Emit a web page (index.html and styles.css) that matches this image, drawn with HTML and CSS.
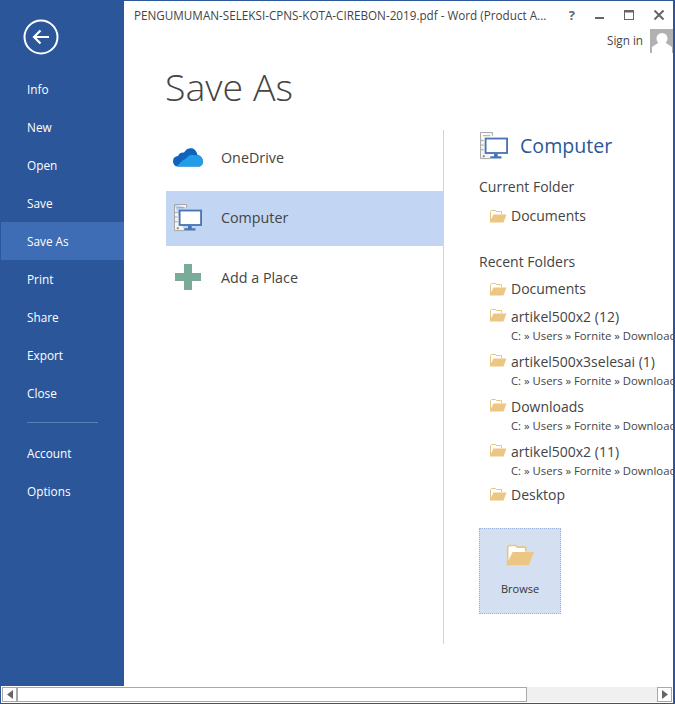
FILE: index.html
```html
<!DOCTYPE html>
<html>
<head>
  <meta charset="utf-8">
  <title>Save As</title>
  <link rel="stylesheet" href="styles.css">
</head>
<body>
<svg class="defs" width="0" height="0">
  <defs>
    <symbol id="folder" viewBox="0 0 18 14">
      <path d="M1.5 12.5V2.5L2.5 1.5H6.5L7.5 2.5H12.5V5" fill="#fff" stroke="#e9c583"/>
      <path d="M0.5 13.5L4.5 5.5H17.5L14.5 13.5Z" fill="#ebc684"/>
    </symbol>
    <symbol id="computer" viewBox="0 0 30 30">
      <path d="M.5.5H13.5V4M.5.5V28.5H11" fill="#f4f4f4" stroke="#a0a0a0"/>
      <path d="M3 4H11M1 9H4M1 14H4M1 19H4" stroke="#a0a0a0"/>
      <rect x="3" y="25" width="2" height="2" fill="#808080"/>
      <rect x="6" y="7" width="23" height="15.5" fill="#fff" stroke="#4a77b4" stroke-width="2"/>
      <path d="M15 23.5h4v2.5h4v2.5H11V26h4z" fill="#4a77b4"/>
    </symbol>
  </defs>
</svg>
<div class="window">
  <div class="main">
    <div class="sidebar">
      <div class="back">
        <svg width="36" height="36" viewBox="0 0 36 36">
          <circle cx="18" cy="18" r="16.5" fill="none" stroke="#fff" stroke-width="2"/>
          <path d="M26 18H11M17.5 11.5L11 18L17.5 24.5" fill="none" stroke="#fff" stroke-width="2.2"/>
        </svg>
      </div>
      <div class="nav-item">Info</div>
      <div class="nav-item">New</div>
      <div class="nav-item">Open</div>
      <div class="nav-item">Save</div>
      <div class="nav-item active">Save As</div>
      <div class="nav-item">Print</div>
      <div class="nav-item">Share</div>
      <div class="nav-item">Export</div>
      <div class="nav-item">Close</div>
      <div class="nav-sep"></div>
      <div class="nav-item">Account</div>
      <div class="nav-item">Options</div>
    </div>
    <div class="content">
      <div class="titlebar">
        <div class="doc-title">PENGUMUMAN-SELEKSI-CPNS-KOTA-CIREBON-2019.pdf - Word (Product A...</div>
        <div class="win-buttons">
          <span class="help">?</span>
          <svg class="min-btn" width="9" height="2" viewBox="0 0 9 2"><rect width="9" height="2" fill="#666"/></svg>
          <svg width="10" height="10" viewBox="0 0 10 10"><rect x=".5" y=".5" width="9" height="9" fill="none" stroke="#666"/><rect width="10" height="2.5" fill="#666"/></svg>
          <svg width="10" height="10" viewBox="0 0 10 10"><path d="M.5.5L9.5 9.5M9.5.5L.5 9.5" stroke="#666" stroke-width="2"/></svg>
        </div>
      </div>
      <div class="signin">
        <span>Sign in</span>
        <svg class="avatar" width="24" height="24" viewBox="0 0 24 24">
          <rect width="24" height="24" fill="#b1b1b1"/>
          <circle cx="12" cy="9.5" r="5.5" fill="#fff"/>
          <path d="M2 24V18L8 14H16L22 18V24Z" fill="#fff"/>
        </svg>
      </div>
      <h1 class="page-title">Save As</h1>
      <div class="columns">
        <div class="places">
          <div class="place">
            <svg class="place-icon" width="30" height="20" viewBox="0 0 30 20">
              <path d="M5 19.5C1 19.5 0 16 0 14C0 11 2 9.5 5 9C6 6 9 5 11 5.5C13 1.5 17 .5 20 1.5C22 2.5 24 5 24.5 8C27.5 8.5 30 11 30 14.5C30 17.5 28 19.5 25.5 19.5Z" fill="#0f63be"/>
              <path d="M3.5 19.5L9 14L13 11.5Q17 7 20 8Q24 8 26 9Q30 11 30 14.5C30 17.5 28 19.5 25.5 19.5Z" fill="#229ee8"/>
            </svg>
            <span>OneDrive</span>
          </div>
          <div class="place selected">
            <svg class="place-icon computer-icon" width="28" height="28"><use href="#computer"/></svg>
            <span>Computer</span>
          </div>
          <div class="place">
            <svg class="place-icon plus-icon" width="26" height="26" viewBox="0 0 26 26">
              <path d="M9 0H17V9H26V17H17V26H9V17H0V9H9Z" fill="#7aab98"/>
            </svg>
            <span>Add a Place</span>
          </div>
        </div>
        <div class="detail">
          <div class="detail-head">
            <svg width="28" height="28"><use href="#computer"/></svg>
            <span>Computer</span>
          </div>
          <div class="group-title first">Current Folder</div>
          <div class="folder"><svg width="18" height="14"><use href="#folder"/></svg><span>Documents</span></div>
          <div class="group-title second">Recent Folders</div>
          <div class="folder"><svg width="18" height="14"><use href="#folder"/></svg><span>Documents</span></div>
          <div class="folder two-line"><svg width="18" height="14"><use href="#folder"/></svg><div><div>artikel500x2 (12)</div><div class="path">C: » Users » Fornite » Downloads</div></div></div>
          <div class="folder two-line"><svg width="18" height="14"><use href="#folder"/></svg><div><div>artikel500x3selesai (1)</div><div class="path">C: » Users » Fornite » Downloads</div></div></div>
          <div class="folder two-line"><svg width="18" height="14"><use href="#folder"/></svg><div><div>Downloads</div><div class="path">C: » Users » Fornite » Downloads</div></div></div>
          <div class="folder two-line"><svg width="18" height="14"><use href="#folder"/></svg><div><div>artikel500x2 (11)</div><div class="path">C: » Users » Fornite » Downloads</div></div></div>
          <div class="folder last"><svg width="18" height="14"><use href="#folder"/></svg><span>Desktop</span></div>
          <div class="browse">
            <svg width="30" height="23"><use href="#folder"/></svg>
            <span>Browse</span>
          </div>
        </div>
      </div>
    </div>
  </div>
  <div class="scrollbar">
    <div class="arrow"><svg width="6" height="9" viewBox="0 0 6 9"><path d="M6 0V9L0 4.5Z" fill="#666"/></svg></div>
    <div class="thumb"></div>
    <div class="track"></div>
    <div class="arrow"><svg width="6" height="9" viewBox="0 0 6 9"><path d="M0 0V9L6 4.5Z" fill="#666"/></svg></div>
  </div>
</div>
</body>
</html>
```

FILE: styles.css
```css
html, body {
  margin: 0;
  padding: 0;
  font-family: "Open Sans", "Noto Sans", sans-serif;
  color: #444;
  background: #fff;
}
.defs {
  display: block;
  height: 0;
}
.window {
  width: 675px;
  height: 704px;
  box-sizing: border-box;
  border: 1px solid #2b579a;
  border-right-width: 2px;
  display: flex;
  flex-direction: column;
  overflow: hidden;
}
.main {
  display: flex;
  height: 685px;
}
.sidebar {
  width: 123px;
  flex: none;
  background: #2b579a;
  color: #fff;
  font-size: 11.8px;
}
.back {
  height: 69px;
  padding: 18px 0 0 22px;
  box-sizing: border-box;
}
.nav-item {
  height: 38px;
  line-height: 38px;
  padding-left: 26px;
}
.nav-item.active {
  background: #3e6db5;
}
.nav-sep {
  height: 1px;
  margin: 10px 26px 11px 26px;
  background: #5a80b8;
}
.content {
  flex: 1;
  min-width: 0;
  overflow: hidden;
}
.titlebar {
  display: flex;
  justify-content: space-between;
  align-items: center;
  height: 28px;
  padding-left: 10px;
}
.doc-title {
  font-size: 11.7px;
  white-space: nowrap;
}
.win-buttons {
  display: flex;
  align-items: center;
  gap: 20px;
  padding-right: 9px;
}
.help {
  font-weight: 700;
  font-size: 13px;
  color: #666;
}
.min-btn {
  margin-top: 6px;
}
.signin {
  display: flex;
  justify-content: flex-end;
  align-items: center;
  gap: 7px;
  font-size: 11.7px;
  height: 24px;
  margin-right: -1px;
}
.signin span {
  padding-bottom: 3px;
}
.avatar {
  display: block;
}
.page-title {
  margin: 0;
  padding-left: 41px;
  font-size: 37.5px;
  font-weight: 300;
  line-height: 48px;
  height: 60px;
  padding-top: 10px;
  box-sizing: content-box;
}
.columns {
  display: flex;
  margin-top: 7px;
}
.places {
  width: 277px;
  margin-left: 42px;
  padding-top: 1px;
  flex: none;
}
.place {
  display: flex;
  align-items: center;
  height: 55px;
  margin-bottom: 5px;
  font-size: 14.3px;
}
.place span {
  padding-bottom: 3px;
}
.place.selected {
  background: #c2d5f2;
}
.place-icon {
  margin: 0 18px 4px 7px;
  flex: none;
}
.computer-icon {
  margin: 0 19px 2px 8px;
}
.plus-icon {
  margin: 0 20px 4px 9px;
}
.detail {
  border-left: 1px solid #d4d4d4;
  padding-left: 35px;
  height: 514px;
  flex: 1;
  min-width: 0;
  box-sizing: border-box;
  white-space: nowrap;
}
.detail-head {
  display: flex;
  align-items: center;
  gap: 12px;
  height: 28px;
  margin-top: 2px;
  color: #2b579a;
  font-size: 19.6px;
  padding-left: 1px;
}
.detail-head span {
  padding-bottom: 2px;
}
.group-title {
  font-size: 14px;
  line-height: 20px;
}
.group-title.first {
  margin-top: 17px;
  margin-bottom: 5px;
}
.group-title.second {
  margin-top: 23px;
  margin-bottom: 3px;
}
.folder {
  display: flex;
  align-items: center;
  gap: 4px;
  padding-left: 10px;
  font-size: 14px;
  height: 27px;
}
.folder svg {
  flex: none;
}
.folder.two-line {
  height: 45px;
  box-sizing: border-box;
  padding-top: 5px;
  align-items: flex-start;
  line-height: 20px;
}
.folder.two-line svg {
  margin-top: 1px;
}
.folder.last {
  height: 24px;
}
.path {
  font-size: 11.3px;
  line-height: 17px;
}
.browse {
  width: 82px;
  height: 86px;
  box-sizing: border-box;
  margin-top: 22px;
  background: #d4e0f2;
  border: 1px dotted #9db5d8;
  display: flex;
  flex-direction: column;
  align-items: center;
  padding-top: 14px;
  gap: 15px;
  font-size: 11px;
  color: #333;
}
.scrollbar {
  display: flex;
  height: 17px;
  background: #f0f0f0;
  border: 1px solid #fff;
  box-sizing: border-box;
}
.arrow {
  width: 15px;
  background: #fff;
  border: 1px solid #a9a9a9;
  box-sizing: border-box;
  display: flex;
  align-items: center;
  justify-content: center;
  flex: none;
}
.thumb {
  width: 510px;
  background: #fff;
  border: 1px solid #a9a9a9;
  box-sizing: border-box;
  flex: none;
}
.track {
  flex: 1;
}
```
